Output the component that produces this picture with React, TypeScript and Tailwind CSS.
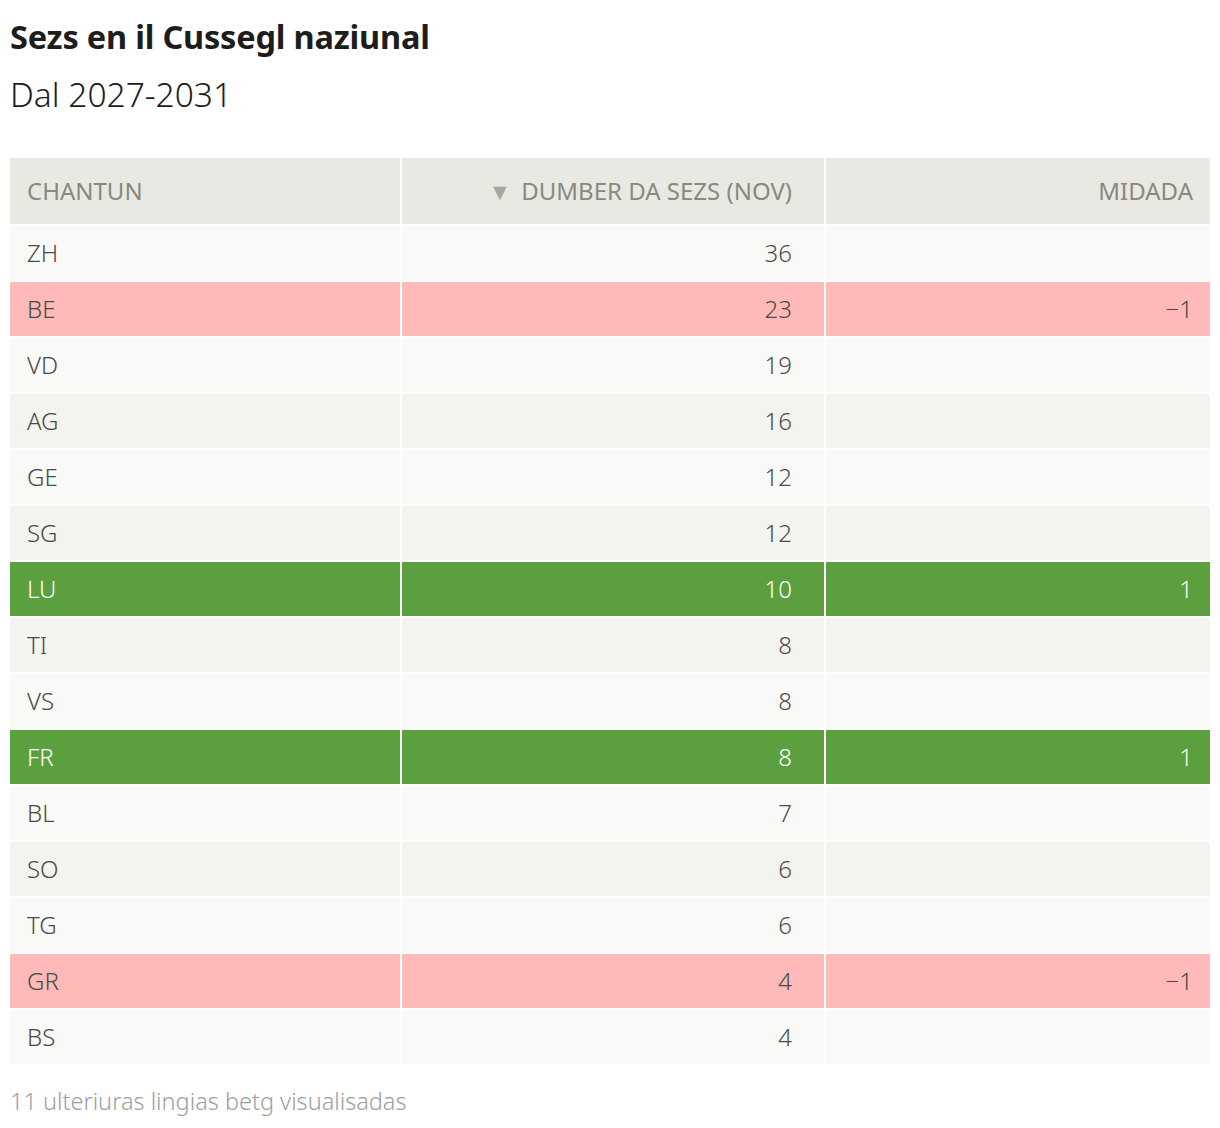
import React from "react";

type Row = { code: string; seats: number; change?: number };

const rows: Row[] = [
  { code: "ZH", seats: 36 },
  { code: "BE", seats: 23, change: -1 },
  { code: "VD", seats: 19 },
  { code: "AG", seats: 16 },
  { code: "GE", seats: 12 },
  { code: "SG", seats: 12 },
  { code: "LU", seats: 10, change: 1 },
  { code: "TI", seats: 8 },
  { code: "VS", seats: 8 },
  { code: "FR", seats: 8, change: 1 },
  { code: "BL", seats: 7 },
  { code: "SO", seats: 6 },
  { code: "TG", seats: 6 },
  { code: "GR", seats: 4, change: -1 },
  { code: "BS", seats: 4 },
];

function cellTone(row: Row, i: number) {
  if (row.change && row.change < 0) return "bg-[#ffb9b9] text-[#4a4a48]";
  if (row.change && row.change > 0) return "bg-[#5c9f3e] text-white";
  return i % 2 === 0 ? "bg-[#f9f9f7] text-[#4a4a48]" : "bg-[#f3f3ef] text-[#4a4a48]";
}

export default function App() {
  return (
    <div className="min-h-[1128px] bg-white px-[10px] pt-[15px] font-['Noto_Sans',sans-serif]">
      <h1 className="text-[32.5px] font-bold leading-[44px] tracking-[-0.2px] text-[#1d1d1b]">
        Sezs en il Cussegl naziunal
      </h1>
      <p className="mt-[13px] text-[33.5px] font-light leading-[44px] text-[#1d1d1b]">Dal 2027-2031</p>

      <div className="mt-[42px] grid grid-cols-[390px_422px_384px] gap-x-[2px] gap-y-[2px] text-[24px] font-light">
        <div className="flex h-[66px] items-center bg-[#e9e9e4] pl-[17px] text-[24px] font-normal text-[#8a897e]">
          CHANTUN
        </div>
        <div className="flex h-[66px] items-center justify-end gap-[10px] bg-[#e9e9e4] pr-[32px] text-[24px] font-normal text-[#8a897e]">
          <span className="text-[23px] text-[#a8a79e]">▼</span>
          <span>DUMBER DA SEZS (NOV)</span>
        </div>
        <div className="flex h-[66px] items-center justify-end bg-[#e9e9e4] pr-[17px] text-[24px] font-normal text-[#8a897e]">
          MIDADA
        </div>

        {rows.map((row, i) => {
          const tone = cellTone(row, i);
          return (
            <React.Fragment key={row.code}>
              <div className={`flex h-[54px] items-center pl-[17px] ${tone}`}>{row.code}</div>
              <div className={`flex h-[54px] items-center justify-end pr-[32px] ${tone}`}>{row.seats}</div>
              <div className={`flex h-[54px] items-center justify-end pr-[17px] ${tone}`}>
                {row.change ? (row.change < 0 ? `\u2212${Math.abs(row.change)}` : row.change) : ""}
              </div>
            </React.Fragment>
          );
        })}
      </div>

      <p className="mt-[20px] text-[23.5px] font-light text-[#9e9e9c]">11 ulteriuras lingias betg visualisadas</p>
    </div>
  );
}
